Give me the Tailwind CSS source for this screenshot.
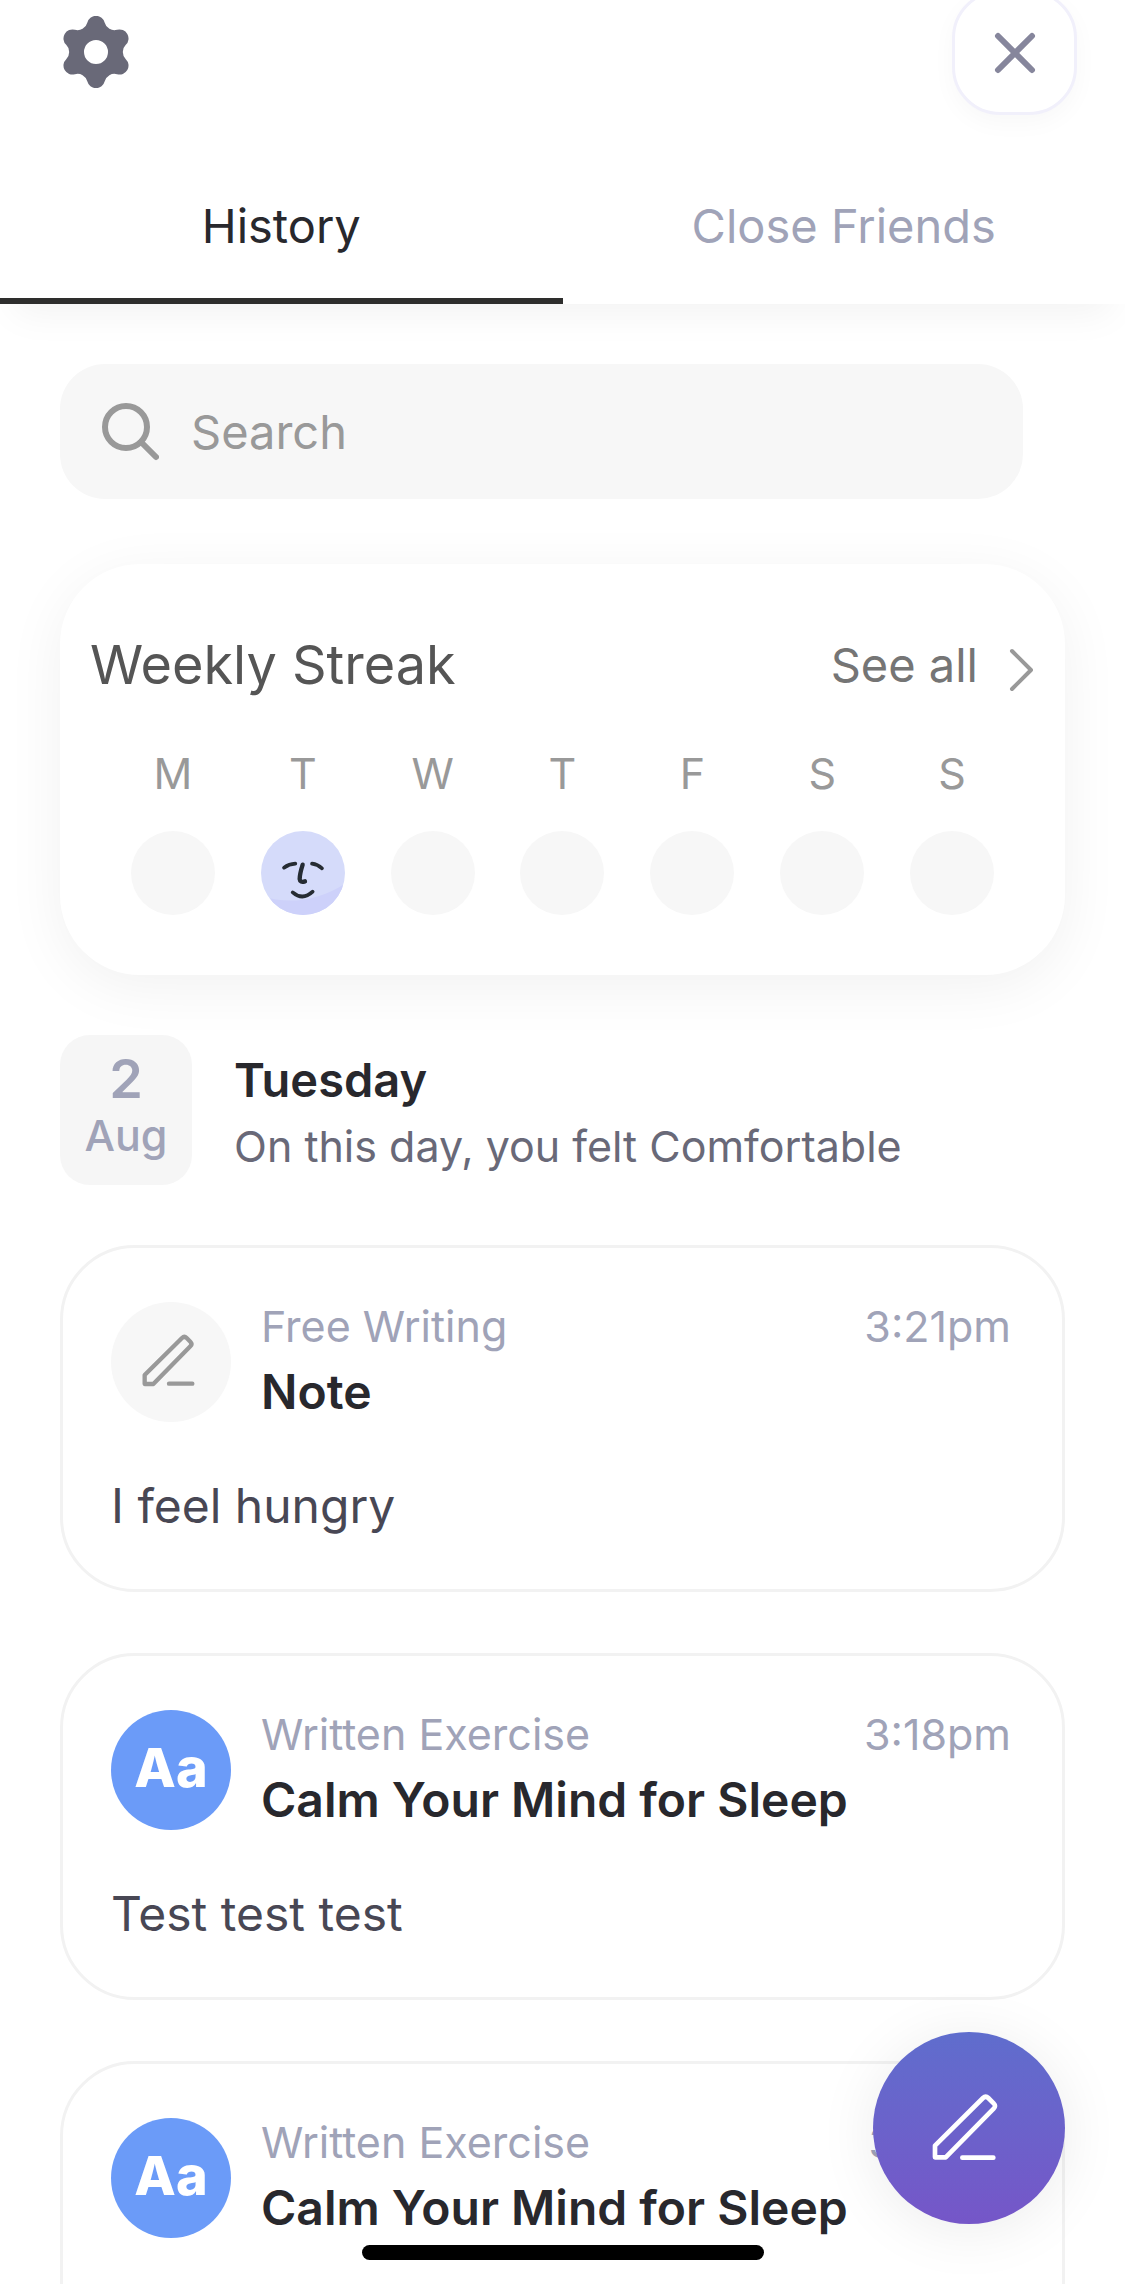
<!DOCTYPE html>
<html lang="en">

<head>
  <meta charset="UTF-8" />
  <meta name="viewport" content="width=device-width, initial-scale=1.0" />
  <title>History</title>
  <!-- Tailwind CSS CDN -->
  <script src="https://cdn.jsdelivr.net/npm/@tailwindcss/browser@4"></script>
</head>

<body class="bg-white font-['Inter',sans-serif] text-[#28282d] h-screen flex flex-col overflow-hidden">

  <!-- Header -->
  <header class="relative z-10 shrink-0 bg-white shadow-[0_24px_36px_-14px_rgba(0,0,0,0.05)]">
    <div class="h-[150px] flex justify-between items-start pl-[60px] pr-12">
      <button type="button" aria-label="Settings" class="mt-4">
        <svg class="size-[72px]" viewBox="-36 -36 72 72" fill="#696978">
          <path fill-rule="evenodd"
            d="M29.8-7.13A10 10 0 0 0 29.8 7.13A9 9 0 0 1 21.07 22.24A10 10 0 0 0 8.73 29.37A9 9 0 0 1-8.73 29.37A10 10 0 0 0-21.07 22.24A9 9 0 0 1-29.8 7.13A10 10 0 0 0-29.8-7.13A9 9 0 0 1-21.07-22.24A10 10 0 0 0-8.73-29.37A9 9 0 0 1 8.73-29.37A10 10 0 0 0 21.07-22.24A9 9 0 0 1 29.8-7.13ZM12 0A12 12 0 1 0-12 0A12 12 0 1 0 12 0Z" />
        </svg>
      </button>
      <button type="button" aria-label="Close"
        class="-mt-[10px] size-[125px] flex items-center justify-center bg-white border-3 border-[#f1f0fb] rounded-[48px] shadow-[0_8px_24px_rgba(0,0,0,0.03)]">
        <svg class="size-[46px]" viewBox="0 0 46 46" fill="none" stroke="#86869c" stroke-width="6" stroke-linecap="round">
          <path d="M6 6L40 40M40 6L6 40" />
        </svg>
      </button>
    </div>

    <!-- Tabs -->
    <nav class="grid grid-cols-2 text-center text-[47px] leading-[60px]">
      <a href="#history" aria-current="page" class="pt-[46px] pb-[42px] border-b-6 border-[#2e2e2d]">History</a>
      <a href="#friends" class="pt-[46px] pb-[42px] border-b-6 border-transparent text-[#a0a3b8]">Close Friends</a>
    </nav>
  </header>

  <main class="flex-1 min-h-0 overflow-y-auto [scrollbar-width:none] px-[60px] pt-[60px]">

    <!-- Search -->
    <label class="flex items-center mr-[42px] h-[135px] pl-[39px] bg-[#f7f7f7] rounded-[45px]">
      <svg class="size-[60px] shrink-0" viewBox="0 0 60 60" fill="none" stroke="#999999" stroke-width="6" stroke-linecap="round">
        <circle cx="27" cy="25" r="21" />
        <path d="M42 40L57 55" />
      </svg>
      <input type="text" aria-label="Search" placeholder="Search"
        class="flex-1 min-w-0 ml-8 text-[47px] leading-[60px] placeholder:text-[#999999] outline-none" />
    </label>

    <!-- Weekly streak -->
    <section class="mt-[65px] pt-[65px] pb-[60px] bg-white rounded-[80px] shadow-[0_12px_60px_rgba(0,0,0,0.06)]">
      <div class="flex items-center justify-between px-[30px]">
        <h2 class="text-[54px] leading-[72px] text-[#555555]">Weekly Streak</h2>
        <a href="#streak" class="flex items-end gap-[30px] text-[47px] leading-[60px] text-[#757575]">
          See all
          <svg class="w-[27px] h-12" viewBox="0 0 27 48" fill="none" stroke="#999999" stroke-width="4" stroke-linecap="round" stroke-linejoin="round">
            <path d="M4 4L23 23L4 42" />
          </svg>
        </a>
      </div>
      <div class="grid grid-cols-7 mt-[42px] px-12 text-center text-[43px] leading-[60px] text-[#999999]">
        <div>M<div class="mt-7 mx-auto size-[84px] rounded-full bg-[#f7f7f7]"></div></div>
        <div>T
          <svg class="block mt-7 mx-auto size-[84px] rounded-full" viewBox="0 0 252 252" fill="none" stroke="#262c33" stroke-width="11" stroke-linecap="round">
            <path stroke="none" fill="#d5dbfa" d="M0 0H252V252H0Z" />
            <path stroke="none" fill="#cdd1fa" d="M0 195Q130 235 252 158V252H0Z" />
            <path d="M69 110Q84 99 103 98M153 98Q170 100 183 112M95 184Q125 210 155 182" />
            <path stroke-width="13" d="M125 101Q116 130 116 144Q117 156 132 151" />
          </svg>
        </div>
        <div>W<div class="mt-7 mx-auto size-[84px] rounded-full bg-[#f7f7f7]"></div></div>
        <div>T<div class="mt-7 mx-auto size-[84px] rounded-full bg-[#f7f7f7]"></div></div>
        <div>F<div class="mt-7 mx-auto size-[84px] rounded-full bg-[#f7f7f7]"></div></div>
        <div>S<div class="mt-7 mx-auto size-[84px] rounded-full bg-[#f7f7f7]"></div></div>
        <div>S<div class="mt-7 mx-auto size-[84px] rounded-full bg-[#f7f7f7]"></div></div>
      </div>
    </section>

    <!-- Day -->
    <div class="flex mt-[60px] gap-[42px]">
      <div class="w-[132px] h-[150px] shrink-0 pt-4 bg-[#f6f6f6] rounded-[30px] text-center text-[#a0a3b8]">
        <p class="text-[54px] leading-[56px] font-semibold">2</p>
        <p class="text-[43px] leading-[56px] font-medium">Aug</p>
      </div>
      <div class="pt-3 leading-[66px]">
        <h2 class="text-[47px] font-semibold">Tuesday</h2>
        <p class="text-[43px] text-[#696978]">On this day, you felt Comfortable</p>
      </div>
    </div>

    <!-- Entries -->
    <article class="mt-[60px] pt-[45px] pb-[53px] pl-12 pr-[51px] border-3 border-[#f2f2f2] rounded-[75px]">
      <div class="flex items-start gap-[30px] leading-[66px]">
        <svg class="mt-[9px] size-[120px] shrink-0 rounded-full bg-[#f7f7f7]" viewBox="0 0 360 360" fill="none" stroke="#999999" stroke-width="13" stroke-linecap="round" stroke-linejoin="round">
          <path d="M101 246V219L213 108Q220 101 227 108L238 119Q245 126 238 133L127 246ZM174 245H244" />
        </svg>
        <div class="flex-1">
          <div class="flex justify-between text-[43px] text-[#a0a3b8]">
            <p>Free Writing</p>
            <time>3:21pm</time>
          </div>
          <h3 class="text-[48px] font-semibold">Note</h3>
        </div>
      </div>
      <p class="mt-[51px] text-[48px] leading-[60px] text-[#484754]">I feel hungry</p>
    </article>

    <article class="mt-[61px] pt-[45px] pb-[53px] pl-12 pr-[51px] border-3 border-[#f2f2f2] rounded-[75px]">
      <div class="flex items-start gap-[30px] leading-[66px]">
        <div class="mt-[9px] pb-1 size-[120px] shrink-0 flex items-center justify-center rounded-full bg-[#6b9bf8] text-white text-[54px] font-extrabold">Aa</div>
        <div class="flex-1">
          <div class="flex justify-between text-[43px] text-[#a0a3b8]">
            <p>Written Exercise</p>
            <time>3:18pm</time>
          </div>
          <h3 class="text-[48px] font-semibold">Calm Your Mind for Sleep</h3>
        </div>
      </div>
      <p class="mt-[51px] text-[48px] leading-[60px] text-[#484754]">Test test test</p>
    </article>

    <article class="mt-[61px] pt-[45px] pb-[164px] pl-12 pr-[51px] border-3 border-[#f2f2f2] rounded-[75px]">
      <div class="flex items-start gap-[30px] leading-[66px]">
        <div class="mt-[9px] pb-1 size-[120px] shrink-0 flex items-center justify-center rounded-full bg-[#6b9bf8] text-white text-[54px] font-extrabold">Aa</div>
        <div class="flex-1">
          <div class="flex justify-between text-[43px] text-[#a0a3b8]">
            <p>Written Exercise</p>
            <time>3:17pm</time>
          </div>
          <h3 class="text-[48px] font-semibold">Calm Your Mind for Sleep</h3>
        </div>
      </div>
    </article>
  </main>

  <!-- New entry button -->
  <button type="button" aria-label="New entry"
    class="fixed z-20 right-[60px] bottom-[60px] size-[192px] rounded-full bg-linear-to-b from-[#5f6dcd] to-[#7556c8] shadow-[0_6px_60px_rgba(0,0,0,0.08)]">
    <svg class="size-full" viewBox="0 0 576 576" fill="none" stroke="white" stroke-width="14" stroke-linecap="round" stroke-linejoin="round">
      <path d="M186 376V341L330 198Q338 190 346 198L362 214Q370 222 362 230L218 376ZM268 377H361" />
    </svg>
  </button>

  <!-- Home indicator -->
  <div class="fixed z-30 bottom-6 left-1/2 -translate-x-1/2 w-[402px] h-[15px] rounded-full bg-black"></div>

</body>

</html>
